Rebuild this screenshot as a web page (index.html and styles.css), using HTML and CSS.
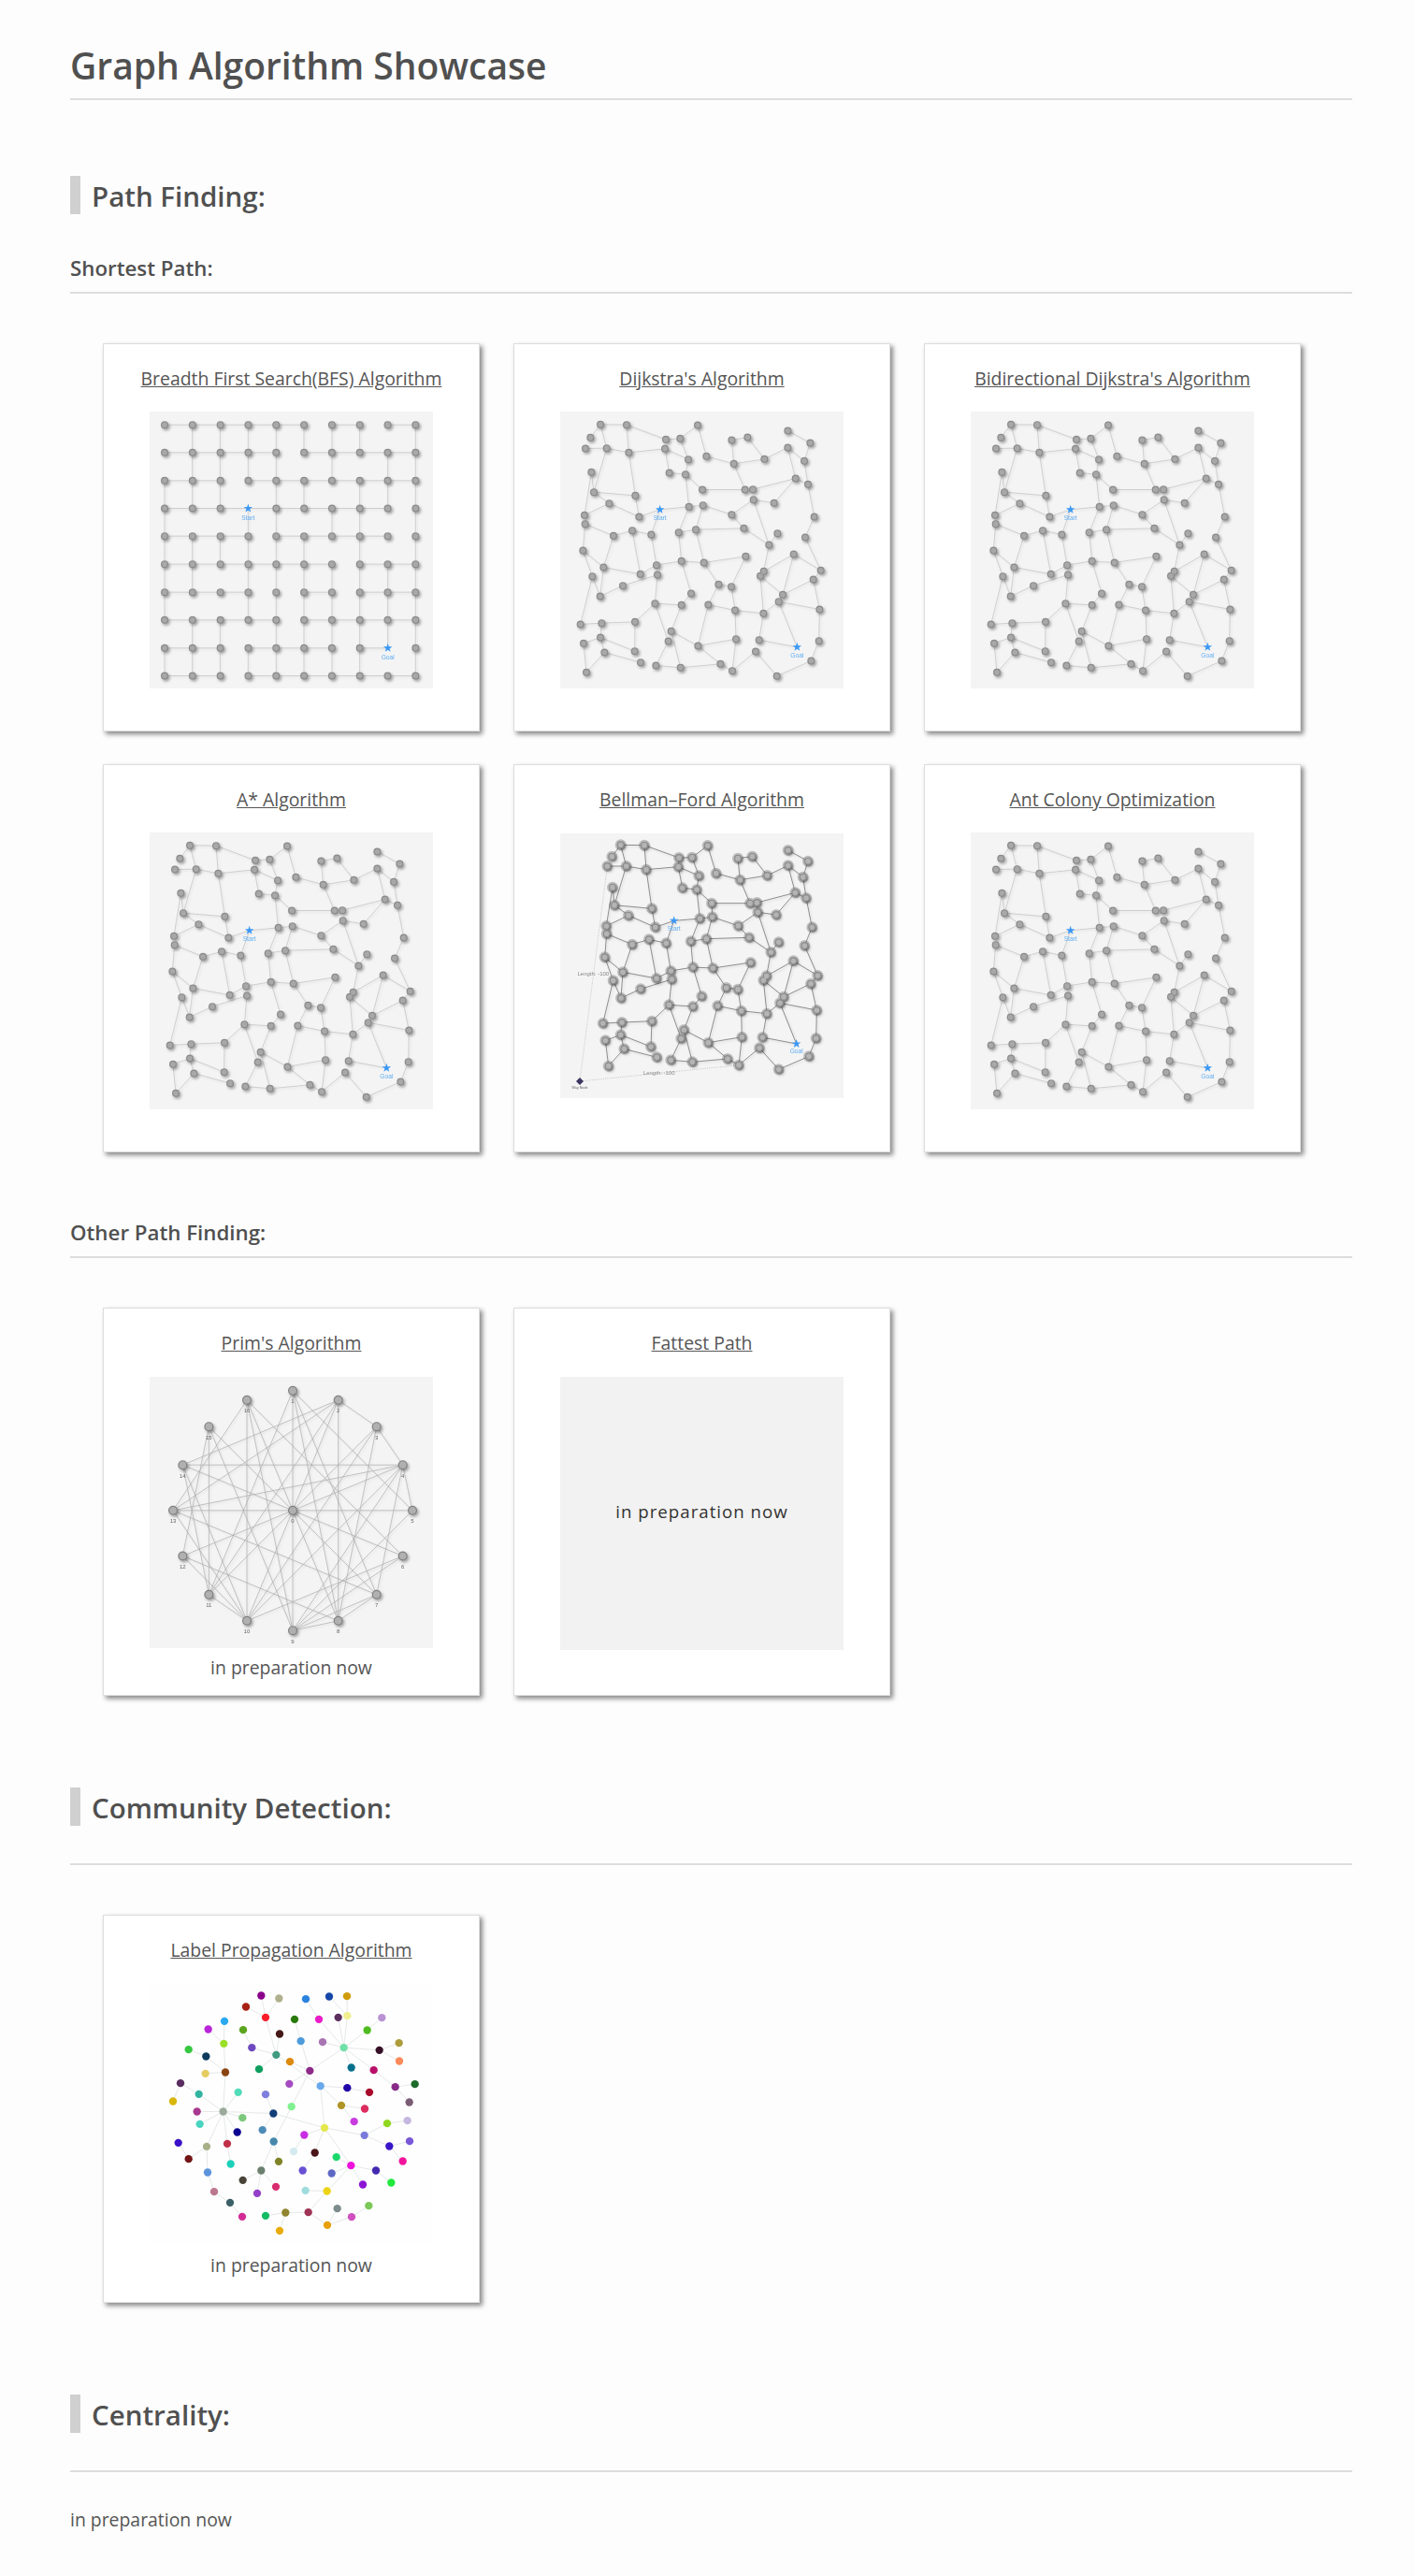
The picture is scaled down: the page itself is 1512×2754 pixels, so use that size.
FILE: index.html
```html
<!DOCTYPE html>
<html lang="en">
<head>
    <meta charset="UTF-8">
    <meta name="viewport" content="width=device-width, initial-scale=1.0">
    <title>Graph Algorithm Showcase</title>
    <link rel="stylesheet" href="styles.css">
</head>
<body>
    <!-- shared drawings: four cards show the same road network -->
    <svg class="graph-defs" aria-hidden="true">
        <defs>
            <path id="star" d="M0-15 3.4-4.8 14.3-4.6 5.6 1.8 8.8 12.1 0 6 -8.8 12.1 -5.6 1.8 -14.3-4.6 -3.4-4.8Z"/>
            <path id="road-nodes" d="M274 324h0M306 282h0M390 283h0M258 359h0M326 358h0M397 372h0M516 330h0M562 327h0M618 284h0M513 360h0M588 394h0M646 384h0M727 332h0M778 323h0M907 302h0M979 341h0M907 356h0M832 393h0M734 408h0M960 399h0M277 435h0M527 437h0M579 442h0M932 455h0M972 474h0M285 499h0M418 510h0M633 491h0M770 491h0M795 490h0M797 523h0M863 534h0M334 535h0M255 573h0M430 578h0M590 546h0M635 541h0M727 571h0M992 578h0M257 601h0M348 639h0M408 622h0M469 635h0M557 628h0M612 619h0M766 615h0M874 631h0M847 668h0M963 644h0M250 686h0M316 740h0M486 733h0M566 720h0M638 725h0M772 705h0M926 698h0M1013 750h0M830 753h0M819 768h0M989 779h0M280 769h0M434 762h0M489 764h0M378 799h0M685 795h0M726 802h0M597 824h0M305 833h0M891 828h0M878 850h0M481 856h0M566 861h0M652 860h0M738 878h0M829 888h0M1009 875h0M242 923h0M310 919h0M417 915h0M533 945h0M306 965h0M524 977h0M252 984h0M619 992h0M741 970h0M815 973h0M1007 976h0M416 1009h0M319 1013h0M435 1045h0M804 1010h0M484 1055h0M563 1062h0M691 1050h0M729 1072h0M982 1040h0M261 1077h0M872 1089h0"/>
            <path id="bellman-nodes" d="M343 317h0M371 280h0M447 281h0M328 348h0M389 348h0M453 359h0M558 321h0M600 320h0M650 282h0M556 350h0M622 379h0M677 371h0M747 323h0M793 317h0M908 297h0M972 332h0M908 346h0M841 378h0M754 392h0M956 383h0M345 416h0M569 418h0M615 423h0M931 433h0M966 450h0M351 473h0M471 484h0M663 467h0M786 467h0M808 465h0M811 496h0M870 504h0M396 506h0M325 540h0M482 544h0M625 516h0M665 511h0M748 539h0M985 544h0M326 565h0M408 599h0M462 583h0M517 595h0M596 589h0M646 581h0M783 577h0M878 592h0M853 624h0M961 603h0M320 640h0M378 688h0M532 684h0M603 672h0M667 675h0M788 657h0M925 652h0M1003 699h0M839 700h0M829 714h0M981 725h0M347 715h0M486 708h0M535 711h0M435 742h0M710 738h0M747 743h0M631 765h0M372 771h0M894 767h0M882 787h0M526 793h0M603 798h0M682 796h0M758 812h0M840 821h0M1000 810h0M314 852h0M375 849h0M471 845h0M574 873h0M371 889h0M565 901h0M322 907h0M652 914h0M760 896h0M826 897h0M998 900h0M468 927h0M382 934h0M487 961h0M816 931h0M532 970h0M601 976h0M714 966h0M750 986h0M975 958h0M332 989h0M878 1000h0"/>
            <path id="prim-nodes" d="M639 674h0M639 290h0M785 320h0M908 405h0M992 528h0M1023 674h0M992 820h0M908 944h0M785 1028h0M639 1059h0M492 1028h0M370 944h0M286 820h0M255 674h0M286 528h0M370 405h0M492 320h0"/>
            <path id="grid-nodes" d="M228 283H1034M228 372H1034M228 462H1034M228 551H407M586 551H1034M228 640H1034M228 730H1034M228 820H1034M228 909H1034M228 999H855M1033 999h.1M228 1088H1034"/>
            <g id="road-graph">
                <path class="graph-edges" d="M274 324 306 282 390 283 516 330 562 327 618 284 646 384 734 408 832 393 907 356 960 399 979 341 907 302
                    M306 282 326 358 397 372 390 283M258 359 326 358M326 358 285 499
                    M397 372 513 360 588 394 579 442 527 437 513 360M562 327 588 394
                    M727 332 778 323 832 393M727 332 734 408 770 491 633 491 579 442M579 442 590 546M590 546 635 541
                    M397 372 418 510 430 578M277 435 285 499 418 510M277 435 255 573 334 535 430 578 497 555 590 546M285 499 334 535
                    M497 555 469 635 408 622 348 639 257 601 250 686 316 740 434 762M489 764 378 799 305 833 280 769 250 686
                    M316 740 305 833M348 639 316 740M408 622 434 762M434 762 486 733M469 635 486 733M486 733 566 720 638 725 772 705
                    M280 769 242 923 310 919 417 915 481 856 489 764M417 915 416 1009 306 965 310 919
                    M306 965 252 984 261 1077 319 1013 306 965M319 1013 435 1045M481 856 566 861 597 824 566 720M566 720 557 628 590 546
                    M566 861 533 945M481 856 524 977 484 1055 563 1062 691 1050 729 1072M533 945 563 1062M533 945 619 992 691 1050
                    M619 992 741 970M619 992 652 860 685 795 638 725M652 860 738 878 829 888M685 795 726 802 772 705M726 802 738 878 741 970 729 1072
                    M729 1072 804 1010 872 1089 982 1040 1007 976 1009 875M1009 875 878 850 829 888 815 973 937 996 878 850
                    M829 888 819 768 891 828 989 779 1013 750 926 698 830 753 847 668M989 779 1009 875M891 828 926 698
                    M1013 750 963 644 992 578 972 474 960 399M907 356 932 455M932 455 972 474M932 455 795 490M932 455 863 534 797 523 847 668
                    M797 523 727 571 635 541 612 619 557 628M727 571 766 615 847 668M847 668 874 631M612 619 766 615M612 619 638 725"/>
                <use href="#road-nodes" class="node-ring"/>
                <use href="#road-nodes" class="node-fill"/>
                <use href="#star" class="graph-star" x="497" y="555"/>
                <text class="graph-label" x="497" y="590">Start</text>
                <use href="#star" class="graph-star" x="937" y="996"/>
                <text class="graph-label" x="937" y="1031">Goal</text>
            </g>
        </defs>
    </svg>

    <div class="page">
        <h1 class="page-title">Graph Algorithm Showcase</h1>

        <h2 class="section-title section-first">Path Finding:</h2>
        <h3 class="sub-title">Shortest Path:</h3>
        <div class="card-grid">
            <div class="card">
                <a class="card-link" href="#">Breadth First Search(BFS) Algorithm</a>
                <svg class="graph graph-tall" viewBox="180 241 909 887">
                    <path class="graph-edges" d="M228 283H675M765 283H854M944 283H1033M228 372H586M675 372H1033M228 462H406M496 462H1033M228 551H944M228 640H496M586 640H944M228 730H765M854 730H1033M228 820H496M675 820H765M854 820H1033M228 909H586M675 909H1033M228 999H406M496 999H765M854 999H944M228 1088H406M496 1088H1033
                        M228 462V909M228 999V1088M317 283V551M317 640V820M317 909V1088M406 283V551M406 640V730M406 909V1088M496 283V462M496 551V909M496 999V1088M586 283V1088M675 283V372M675 462V551M675 640V1088M765 283V462M765 551V640M765 730V1088M854 283V372M854 462V1088M944 372V551M944 730V999M1033 283V1088"/>
                    <use href="#grid-nodes" class="node-ring node-rows"/>
                    <use href="#grid-nodes" class="node-fill node-rows"/>
                    <use href="#star" class="graph-star" x="496" y="551"/>
                    <text class="graph-label" x="496" y="589">Start</text>
                    <use href="#star" class="graph-star" x="944" y="999"/>
                    <text class="graph-label" x="944" y="1037">Goal</text>
                </svg>
            </div>
            <div class="card">
                <a class="card-link" href="#">Dijkstra's Algorithm</a>
                <svg class="graph graph-tall" viewBox="177 241 909 887"><use href="#road-graph"/></svg>
            </div>
            <div class="card">
                <a class="card-link" href="#">Bidirectional Dijkstra's Algorithm</a>
                <svg class="graph graph-tall" viewBox="177 241 909 887"><use href="#road-graph"/></svg>
            </div>
            <div class="card">
                <a class="card-link" href="#">A* Algorithm</a>
                <svg class="graph graph-tall" viewBox="177 241 909 887"><use href="#road-graph"/></svg>
            </div>
            <div class="card">
                <a class="card-link card-link-low" href="#">Bellman–Ford Algorithm</a>
                <svg class="graph graph-flat" viewBox="177 243 909 849">
                    <path class="way-edges" d="M328 348 240 1038 750 986"/>
                    <text class="way-label" x="283" y="698">Length: -100</text>
                    <text class="way-label" x="494" y="1017">Length: -100</text>
                    <path class="graph-edges graph-edges-dark" d="M343 317 371 280 447 281 558 321 600 320 650 282 677 371 754 392 841 378 908 346 956 383 972 332 908 297
                        M371 280 389 348 453 359 447 281M328 348 389 348M389 348 351 473
                        M453 359 556 350 622 379 615 423 569 418 556 350M600 320 622 379M558 321 556 350
                        M747 323 793 317 841 378M747 323 754 392 786 467 663 467 615 423M615 423 625 516M625 516 665 511M663 467 665 511M786 467 808 465 811 496
                        M453 359 471 484 482 544M345 416 351 473 471 484M345 416 325 540 396 506 482 544 542 523 625 516M351 473 396 506
                        M542 523 517 595 462 583 408 599 326 565 320 640 378 688 486 708M535 711 435 742 372 771 347 715 320 640
                        M378 688 372 771M408 599 378 688M462 583 486 708M486 708 532 684M517 595 532 684M532 684 603 672 667 675 788 657
                        M347 715 314 852 375 849 471 845 526 793 535 711M471 845 468 927 371 889 375 849
                        M371 889 322 907 332 989 382 934 371 889M382 934 487 961M526 793 603 798 631 765 603 672M603 672 596 589 625 516
                        M603 798 574 873M526 793 565 901 532 970 601 976 714 966 750 986M574 873 601 976M574 873 652 914 714 966
                        M652 914 760 896M652 914 682 796 710 738 667 675M682 796 758 812 840 821M710 738 747 743 788 657M747 743 758 812 760 896 750 986
                        M750 986 816 931 878 1000 975 958 998 900 1000 810M1000 810 882 787 840 821 826 897 935 918 882 787
                        M840 821 829 714 894 767 981 725 1003 699 925 652 839 700 853 624M981 725 1000 810M894 767 925 652
                        M1003 699 961 603 985 544 966 450 956 383M908 346 931 433M931 433 966 450M931 433 808 465M931 433 870 504 811 496 853 624
                        M811 496 748 539 665 511 646 581 596 589M748 539 783 577 853 624M853 624 878 592M646 581 783 577M646 581 667 675"/>
                    <use href="#bellman-nodes" class="node-halo"/>
                    <use href="#bellman-nodes" class="node-ring"/>
                    <use href="#bellman-nodes" class="node-fill node-fill-light"/>
                    <use href="#star" class="graph-star" x="542" y="523"/>
                    <text class="graph-label" x="542" y="554">Start</text>
                    <use href="#star" class="graph-star" x="935" y="918"/>
                    <text class="graph-label" x="935" y="949">Goal</text>
                    <path class="way-node" d="M240 1026 252 1038 240 1050 228 1038Z"/>
                    <text class="way-node-label" x="240" y="1063">Way Node</text>
                </svg>
            </div>
            <div class="card">
                <a class="card-link" href="#">Ant Colony Optimization</a>
                <svg class="graph graph-tall" viewBox="177 241 909 887"><use href="#road-graph"/></svg>
            </div>
        </div>

        <h3 class="sub-title sub-title-next">Other Path Finding:</h3>
        <div class="card-grid">
            <div class="card">
                <a class="card-link card-link-low" href="#">Prim's Algorithm</a>
                <svg class="graph graph-prim" viewBox="180 246 909 869">
                    <path class="graph-edges graph-edges-prim" d="M639 674 639 290M639 674 785 320M639 674 908 405M639 674 992 528M639 674 1023 674M639 674 992 820M639 674 908 944M639 674 785 1028M639 674 639 1059M639 674 492 1028M639 674 370 944M639 674 286 820M639 674 255 674M639 674 286 528M639 674 370 405M639 674 492 320
                        M639 290 1023 674M639 290 908 944M785 320 286 528M785 320 255 674M785 320 908 405M785 320 785 1028M908 405 992 528M908 405 785 1028M908 405 492 1028
                        M992 528 1023 674M992 528 286 528M992 528 255 674M992 528 492 1028M992 528 908 944M992 528 639 1059M1023 674 639 1059
                        M992 820 492 1028M992 820 492 320M992 820 639 1059M908 944 255 674M908 944 785 1028M908 944 639 1059
                        M785 1028 286 820M785 1028 639 1059M785 1028 639 290M639 1059 370 405M639 1059 492 320
                        M492 1028 492 320M492 1028 286 528M492 1028 255 674M492 1028 370 944
                        M370 944 639 290M370 944 785 320M370 944 286 528M370 944 370 405
                        M286 820 370 405M286 820 492 1028M255 674 492 320"/>
                    <use href="#prim-nodes" class="node-ring node-ring-prim"/>
                    <use href="#prim-nodes" class="node-fill node-fill-prim"/>
                    <g class="prim-labels">
                        <text x="639" y="715">0</text><text x="639" y="331">1</text><text x="785" y="361">2</text><text x="908" y="446">3</text><text x="992" y="569">4</text><text x="1023" y="715">5</text><text x="992" y="861">6</text><text x="908" y="985">7</text><text x="785" y="1069">8</text><text x="639" y="1100">9</text><text x="492" y="1069">10</text><text x="370" y="985">11</text><text x="286" y="861">12</text><text x="255" y="715">13</text><text x="286" y="569">14</text><text x="370" y="446">15</text><text x="492" y="361">16</text>
                    </g>
                </svg>
                <p class="card-note">in preparation now</p>
            </div>
            <div class="card">
                <a class="card-link card-link-low" href="#">Fattest Path</a>
                <div class="placeholder">in preparation now</div>
            </div>
        </div>

        <h2 class="section-title section-lower">Community Detection:</h2>
        <hr class="rule">
        <div class="card-grid">
            <div class="card">
                <a class="card-link card-link-low" href="#">Label Propagation Algorithm</a>
                <svg class="graph graph-community" viewBox="180 245 909 830">
                    <path class="community-edges" d="M538 282 552 352M595 291 552 352M489 318 552 352M552 352 586 472M597 405 586 472M508 449 586 472M480 392 508 449M531 518 586 472M586 472 728 572M630 494 694 523M665 428 694 523M645 358 665 428M681 293 723 358M723 358 803 449M735 431 803 449M785 352 803 449M814 347 803 449M813 284 814 347M756 285 814 347M878 393 803 449M925 353 878 393M917 457 803 449M980 434 917 457M981 492 917 457M827 513 803 449M899 521 803 449M899 521 968 575M968 575 1031 566M968 575 1013 624M694 523 803 449M694 523 628 565M694 523 635 638M635 638 578 750M578 750 594 814M578 750 538 843M538 843 479 874M538 843 525 916M538 843 585 895M728 572 814 578M814 578 885 592M728 572 795 634M795 634 870 645M795 634 836 686M728 572 741 706M741 706 577 660M577 660 416 654M577 660 552 599M577 660 542 713M741 706 676 729M676 729 642 782M741 706 710 786M710 786 671 843M741 706 826 827M741 706 869 730M869 730 942 692M942 692 1007 683M869 730 949 765M949 765 1014 749M949 765 992 813M826 827 779 800M826 827 764 852M826 827 906 843M906 843 955 882M826 827 864 888M826 827 749 909M749 909 680 907M749 909 689 977M689 977 616 978M616 978 552 988M616 978 597 1036M689 977 750 1018M750 1018 782 965M750 1018 828 992M828 992 883 956M416 654 464 592M416 654 338 598M338 598 279 563M279 563 255 621M416 654 332 654M416 654 478 674M416 654 341 694M416 654 461 720M416 654 429 757M429 757 440 822M416 654 363 766M363 766 305 806M305 806 272 754M363 766 366 849M366 849 387 911M387 911 438 946M438 946 477 991M416 654 423 528M423 528 359 532M423 528 361 477M361 477 305 455M423 528 418 436M418 436 368 390M418 436 420 364"/>
                    <g class="community-nodes">
                        <circle cx="538" cy="282" fill="#8b008b"/><circle cx="595" cy="291" fill="#b0b08e"/><circle cx="489" cy="318" fill="#a81f14"/><circle cx="552" cy="352" fill="#fa1e2a"/><circle cx="681" cy="293" fill="#2b83dd"/><circle cx="756" cy="285" fill="#1647a8"/><circle cx="813" cy="284" fill="#d09c0c"/><circle cx="814" cy="347" fill="#efef90"/><circle cx="785" cy="352" fill="#5c2e5e"/><circle cx="723" cy="358" fill="#e91cc8"/><circle cx="645" cy="358" fill="#2a7a0a"/><circle cx="925" cy="353" fill="#b892d2"/><circle cx="420" cy="364" fill="#2aa8f0"/><circle cx="368" cy="390" fill="#b825d8"/><circle cx="480" cy="392" fill="#5aa51c"/><circle cx="418" cy="436" fill="#9ae028"/><circle cx="878" cy="393" fill="#4fbb20"/><circle cx="597" cy="405" fill="#451818"/><circle cx="980" cy="434" fill="#ae9c3c"/><circle cx="508" cy="449" fill="#6f49c0"/><circle cx="665" cy="428" fill="#4e9bdc"/><circle cx="735" cy="431" fill="#a874b4"/><circle cx="803" cy="449" fill="#6fe0a8"/><circle cx="917" cy="457" fill="#371028"/><circle cx="305" cy="455" fill="#36c840"/><circle cx="361" cy="477" fill="#0d3a5c"/><circle cx="586" cy="472" fill="#3f9a80"/><circle cx="630" cy="494" fill="#dc8a10"/><circle cx="981" cy="492" fill="#fa8a5a"/><circle cx="531" cy="518" fill="#0f9e5e"/><circle cx="694" cy="523" fill="#8e2a88"/><circle cx="827" cy="513" fill="#08708c"/><circle cx="899" cy="521" fill="#b81068"/><circle cx="359" cy="532" fill="#e4cc60"/><circle cx="423" cy="528" fill="#8a4414"/><circle cx="279" cy="563" fill="#5a2c60"/><circle cx="628" cy="565" fill="#a44cc0"/><circle cx="728" cy="572" fill="#6aa8ec"/><circle cx="814" cy="578" fill="#2006a8"/><circle cx="885" cy="592" fill="#a80a2c"/><circle cx="968" cy="575" fill="#8a2a88"/><circle cx="1031" cy="566" fill="#1c6a2a"/><circle cx="464" cy="592" fill="#50dcb8"/><circle cx="338" cy="598" fill="#30b4a0"/><circle cx="255" cy="621" fill="#d8b60c"/><circle cx="552" cy="599" fill="#8080dc"/><circle cx="1013" cy="624" fill="#7a5c74"/><circle cx="795" cy="634" fill="#b09428"/><circle cx="870" cy="645" fill="#dc2c60"/><circle cx="635" cy="638" fill="#80f090"/><circle cx="416" cy="654" fill="#9caa9c"/><circle cx="332" cy="654" fill="#a83890"/><circle cx="577" cy="660" fill="#123e78"/><circle cx="478" cy="674" fill="#7cc87c"/><circle cx="341" cy="694" fill="#48d4c0"/><circle cx="542" cy="713" fill="#4e8cb8"/><circle cx="461" cy="720" fill="#0c0090"/><circle cx="741" cy="706" fill="#e4e84c"/><circle cx="836" cy="686" fill="#c83ce0"/><circle cx="942" cy="692" fill="#90d820"/><circle cx="1007" cy="683" fill="#c4b8e0"/><circle cx="676" cy="729" fill="#c82ce4"/><circle cx="869" cy="730" fill="#7a7adc"/><circle cx="1014" cy="749" fill="#7858d8"/><circle cx="272" cy="754" fill="#3a10c8"/><circle cx="429" cy="757" fill="#c03048"/><circle cx="578" cy="750" fill="#4588ac"/><circle cx="363" cy="766" fill="#a8b088"/><circle cx="949" cy="765" fill="#3a14c8"/><circle cx="642" cy="782" fill="#d4eaf0"/><circle cx="710" cy="786" fill="#4a1418"/><circle cx="305" cy="806" fill="#741414"/><circle cx="779" cy="800" fill="#1cd86c"/><circle cx="992" cy="813" fill="#f0149c"/><circle cx="440" cy="822" fill="#1cd0b8"/><circle cx="594" cy="814" fill="#808428"/><circle cx="826" cy="827" fill="#ee10dc"/><circle cx="671" cy="843" fill="#6850d4"/><circle cx="906" cy="843" fill="#4428b0"/><circle cx="538" cy="843" fill="#6c8070"/><circle cx="764" cy="852" fill="#5c68c4"/><circle cx="366" cy="849" fill="#5c94dc"/><circle cx="479" cy="874" fill="#4a4438"/><circle cx="864" cy="888" fill="#8c14d4"/><circle cx="955" cy="882" fill="#20e83c"/><circle cx="585" cy="895" fill="#d82c70"/><circle cx="749" cy="909" fill="#ecd414"/><circle cx="680" cy="907" fill="#a0dcdc"/><circle cx="525" cy="916" fill="#9440c8"/><circle cx="387" cy="911" fill="#bc7890"/><circle cx="438" cy="946" fill="#3c6068"/><circle cx="883" cy="956" fill="#7cc858"/><circle cx="782" cy="965" fill="#7c8c8c"/><circle cx="616" cy="978" fill="#908430"/><circle cx="689" cy="977" fill="#a03454"/><circle cx="828" cy="992" fill="#d050c0"/><circle cx="552" cy="988" fill="#14bc64"/><circle cx="477" cy="991" fill="#d42c94"/><circle cx="750" cy="1018" fill="#e8a008"/><circle cx="597" cy="1036" fill="#e8ac08"/>
                    </g>
                </svg>
                <p class="card-note">in preparation now</p>
            </div>
        </div>

        <h2 class="section-title section-lower">Centrality:</h2>
        <hr class="rule">
        <p class="page-note">in preparation now</p>
    </div>
</body>
</html>
```
FILE: styles.css
```css
body {
    font-family: "Open Sans", "Noto Sans", sans-serif;
    margin: 0;
    padding: 0;
    background-color: #fdfdfd;
    color: #555;
}
.page {
    width: 1371px;
    margin-left: 75px;
    padding: 40px 0 47px;
}
.page-title {
    margin: 0;
    height: 65px;
    line-height: 60px;
    font-size: 39px;
    font-weight: 600;
    color: #505050;
    border-bottom: 2px solid #ddd;
}
.section-title {
    margin: 0;
    height: 41px;
    line-height: 43px;
    padding-left: 12px;
    border-left: 11px solid #d0d0d0;
    font-size: 29.5px;
    font-weight: 600;
    color: #505050;
}
.section-first {
    margin-top: 81px;
}
.section-lower {
    margin-top: 98px;
}
.sub-title {
    margin: 0;
    height: 40px;
    line-height: 30px;
    font-size: 22.3px;
    font-weight: 600;
    color: #505050;
    border-bottom: 2px solid #ddd;
}
.section-first + .sub-title {
    margin-top: 43px;
}
.sub-title-next {
    margin-top: 71px;
}
.rule {
    margin: 40px 0 0;
    height: 2px;
    border: 0;
    background-color: #ddd;
}
.card-grid {
    display: grid;
    grid-template-columns: repeat(3, 403px);
    gap: 35px 36px;
    margin: 53px 0 0 35px;
}
.card {
    box-sizing: border-box;
    height: 415px;
    display: flex;
    flex-direction: column;
    align-items: center;
    background-color: #fff;
    border: 1px solid #ddd;
    box-shadow: 3px 3px 5px #888;
}
.card-link {
    margin-top: 25px;
    margin-bottom: 23px;
    height: 24px;
    line-height: 24px;
    font-size: 19.4px;
    color: #555;
}
.card-link-low {
    margin-bottom: 24px;
}
.card-note {
    margin: 8px 0 0;
    font-size: 19.4px;
    line-height: 26px;
    color: #555;
}
.placeholder {
    box-sizing: border-box;
    width: 303px;
    height: 292px;
    padding-bottom: 6px;
    display: flex;
    align-items: center;
    justify-content: center;
    background-color: #f2f2f2;
    color: #333;
    font-size: 18.7px;
    letter-spacing: 1px;
}
.page-note {
    margin: 38px 0 0;
    font-size: 19.4px;
    line-height: 26px;
    color: #555;
}

/* graph drawings, coordinates are 3x the size on the page */
.graph-defs {
    position: absolute;
    width: 0;
    height: 0;
}
.graph {
    display: block;
    width: 303px;
    background-color: #f4f4f4;
    fill: none;
    filter: blur(0.3px);
}
.graph-tall {
    height: 296px;
}
.graph-flat {
    height: 283px;
}
.graph-prim {
    height: 290px;
}
.graph-community {
    height: 277px;
    margin-bottom: 3px;
    background-color: #fefefe;
}
.graph-edges {
    stroke: #bcbcbc;
    stroke-width: 2;
    filter: drop-shadow(4px 4px 3px rgba(0, 0, 0, 0.12));
}
.graph-edges-dark {
    stroke: #8c8c8c;
    stroke-width: 3;
}
.graph-edges-prim {
    stroke: #a8a8a8;
}
.node-ring {
    stroke: #8a8a8a;
    stroke-width: 24;
    stroke-linecap: round;
    filter: drop-shadow(5px 6px 4px rgba(0, 0, 0, 0.35));
}
.node-ring-prim {
    stroke: #808080;
    stroke-width: 30;
}
.node-fill {
    stroke: #a8a8a8;
    stroke-width: 17;
    stroke-linecap: round;
}
.node-fill-light {
    stroke: #b4b4b4;
}
.node-fill-prim {
    stroke: #b0b0b0;
    stroke-width: 23;
}
.node-halo {
    stroke: rgba(90, 90, 90, 0.35);
    stroke-width: 36;
    stroke-linecap: round;
}
.node-rows {
    stroke-dasharray: 0 89.44;
}
.graph-star {
    fill: #3a98f5;
}
.graph-label {
    fill: #62aef2;
    font-family: "Liberation Sans", sans-serif;
    font-size: 20px;
    text-anchor: middle;
}
.way-edges {
    stroke: #aaa;
    stroke-width: 2;
    stroke-dasharray: 3 4;
}
.way-label {
    fill: #888;
    font-family: "Liberation Sans", sans-serif;
    font-size: 18px;
    text-anchor: middle;
}
.way-node {
    fill: #3c3560;
}
.way-node-label {
    fill: #666;
    font-family: "Liberation Sans", sans-serif;
    font-size: 11px;
    text-anchor: middle;
}
.prim-labels text {
    fill: #666;
    font-family: "Liberation Sans", sans-serif;
    font-size: 18px;
    text-anchor: middle;
}
.community-edges {
    stroke: #dfe4e2;
    stroke-width: 2.5;
}
.community-nodes circle {
    r: 12.5px;
}
```
